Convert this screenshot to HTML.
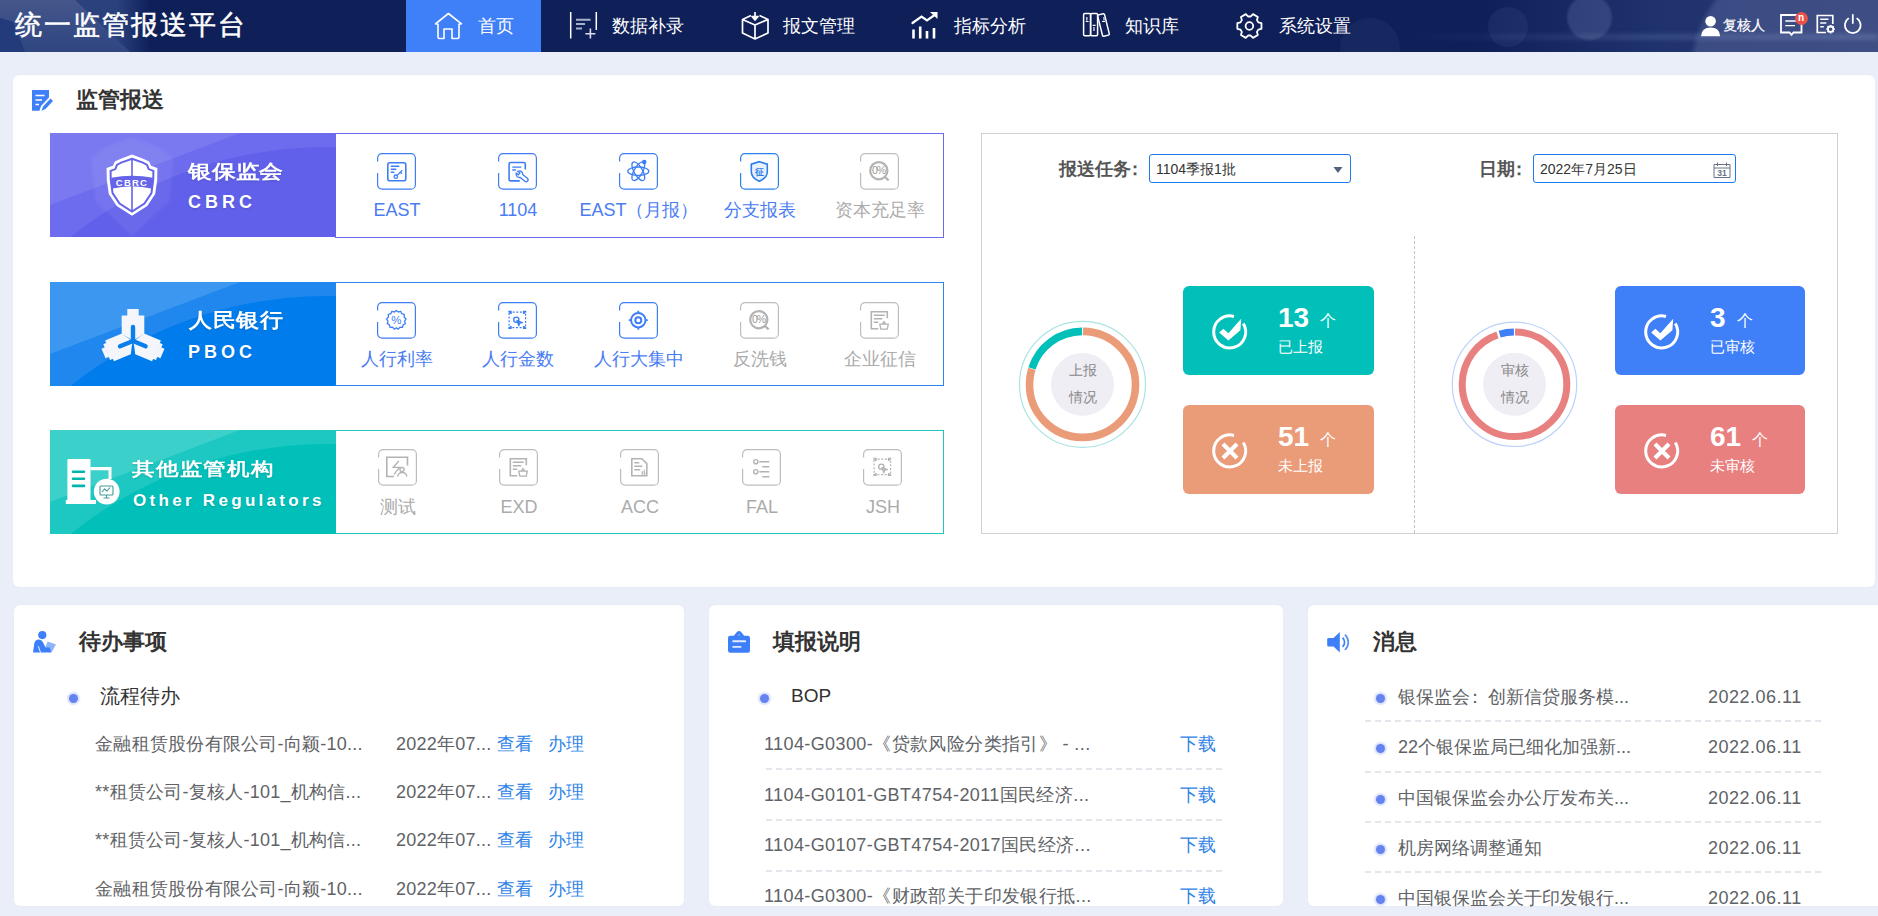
<!DOCTYPE html>
<html><head><meta charset="utf-8">
<style>
*{margin:0;padding:0;box-sizing:border-box}
html,body{width:1878px;height:916px;overflow:hidden}
body{position:relative;background:#eaeef9;font-family:"Liberation Sans",sans-serif;color:#333}
.a{position:absolute}
.t{position:absolute;white-space:nowrap;line-height:30px;height:30px}
#hdr{left:0;top:0;width:1878px;height:52px;background:#0f2059;overflow:hidden}
.nav{color:#fff;font-size:18px}
.card{position:absolute;background:#fff;border-radius:6px}
.ban{overflow:hidden}
.ban .t{text-shadow:0 1px 2px rgba(0,40,60,.18)}
.it{width:200px;text-align:center;font-size:18px}
.row{font-size:18px;color:#606266;letter-spacing:.25px}
.r2{letter-spacing:.4px}
.r3{letter-spacing:0}
.card{box-shadow:0 0 2px rgba(40,60,120,.06)}
.lk{color:#2f83e6}
.dash{height:2px;background:repeating-linear-gradient(90deg,#e6e5ec 0 6px,transparent 6px 10px)}
</style></head><body>
<!-- HEADER -->
<div id="hdr" class="a">
<div class="a" style="left:0;top:0;width:150px;height:52px;background:linear-gradient(90deg,#2a417e 0%,#2a417e 78%,#0f2059 100%)"></div><div class="a" style="left:0;top:0;width:150px;height:52px;background:linear-gradient(180deg,#45568b,#3a4e86 45%,#2f4681);clip-path:polygon(0 0,75px 0,130px 52px,25px 52px,13px 22px,0 18px)"></div><div class="a" style="left:0;top:0;width:150px;height:52px;background:#233b7b;clip-path:polygon(0 18px,13px 22px,25px 52px,0 52px)"></div>

<div class="a" style="left:1480px;top:0;width:398px;height:52px;background:linear-gradient(90deg,rgba(70,95,160,0),rgba(75,98,160,.28) 45%,rgba(85,102,160,.32))"></div>
<div class="a" style="left:1567px;top:-5px;width:45px;height:45px;border-radius:50%;background:rgba(150,165,215,.2);filter:blur(.8px)"></div>
<div class="a" style="left:1692px;top:-45px;width:230px;height:230px;border-radius:50%;background:rgba(165,175,220,.2);filter:blur(2px)"></div>
<div class="a" style="left:1488px;top:7px;width:40px;height:40px;border-radius:50%;background:rgba(150,165,215,.08)"></div><div class="a" style="left:1340px;top:18px;width:60px;height:60px;border-radius:50%;background:rgba(150,165,215,.06)"></div>
<div class="a" style="left:1400px;top:34px;width:478px;height:6px;background:linear-gradient(90deg,rgba(150,170,220,0),rgba(150,170,220,.18) 50%,rgba(150,170,220,.25));filter:blur(2px)"></div>
<div class="t" style="left:15px;top:10px;line-height:30px;font-size:27px;color:#fff;letter-spacing:2px;-webkit-text-stroke:.5px #fff">统一监管报送平台</div>
<div class="a" style="left:406px;top:0;width:135px;height:52px;background:#3f7ff8"></div>
<svg class="a" style="left:430px;top:8px" width="36" height="36" viewBox="0 0 36 36" fill="none" stroke="#fff" stroke-width="1.6" stroke-linejoin="round">
<path d="M5.5 15.8 L18.4 5.5 L31.5 15.8 L29 16.3 V29 Q29 30.5 27.5 30.5 H22 V21 H14 V30.5 H9.5 Q8 30.5 8 29 V16.3 Z"/></svg>
<div class="t nav" style="left:478px;top:11px">首页</div>
<svg class="a" style="left:566px;top:8px" width="36" height="36" viewBox="0 0 36 36" fill="none" stroke="#fff" stroke-width="1.5">
<path d="M4.7 4 V30.6 M30.3 4 V21.9"/><path d="M10 11.8 H24.6 M10 16 H19 M10 20.4 H16" stroke="#a8b0cc" stroke-width="2"/><path d="M24.4 20.5 V30.5 M19.4 25.8 H29.4" stroke="#dde" stroke-width="1.6"/></svg>
<div class="t nav" style="left:612px;top:11px">数据补录</div>
<svg class="a" style="left:738px;top:10px" width="36" height="36" viewBox="0 0 36 36" fill="none" stroke="#fff" stroke-width="1.7" stroke-linejoin="round">
<path d="M13 5.5 L4.5 9.5 M21.5 5.5 L30 9.5 M4.5 9.5 L17 15 L30 9.5 V23 L17 29 L4.5 23 Z M17 15 V29"/><path d="M17 2 V8" /><path d="M14 6.5 L17 10 L20 6.5 Z" fill="#fff"/></svg>
<div class="t nav" style="left:783px;top:11px">报文管理</div>
<svg class="a" style="left:908px;top:9px" width="36" height="36" viewBox="0 0 36 36" fill="none" stroke="#fff" stroke-width="2.2" stroke-linecap="round">
<path d="M4.5 14 L13.5 7.5 L19 11.5 L28 5"/><path d="M22 3 H29.5 V10 Z" fill="#fff" stroke="none"/><path d="M5.5 20.5 V29.5 M12.2 17.5 V29.5 M19 22 V29.5 M26 19 V29.5" stroke-width="2.6" stroke-linecap="butt"/></svg>
<div class="t nav" style="left:954px;top:11px">指标分析</div>
<svg class="a" style="left:1080px;top:8px" width="36" height="36" viewBox="0 0 36 36" fill="none" stroke="#fff" stroke-width="1.5">
<rect x="3.6" y="5.4" width="7" height="22.3" rx="1.2"/><rect x="10.6" y="5.4" width="7" height="22.3" rx="1.2"/><rect x="20" y="6" width="7" height="22" rx="1.2" transform="rotate(-14 23.5 17)"/>
<path d="M6.8 9 V12.5 M14 19 V23 M24 9 V12.5" stroke="#b8bfd6" stroke-width="1.6"/><path d="M5.8 13.5 H8.6 M12.6 17.4 H15.6 M22 13.5 H25" stroke-width="1.2"/></svg>
<div class="t nav" style="left:1125px;top:11px">知识库</div>
<svg class="a" style="left:1232px;top:8px" width="36" height="36" viewBox="0 0 36 36" fill="none" stroke="#fff" stroke-width="1.8" stroke-linejoin="round">
<path d="M29.48 20.79 L29.48 15.21 L26.30 14.40 L24.96 12.09 L25.86 8.93 L21.03 6.14 L18.74 8.49 L16.06 8.49 L13.77 6.14 L8.94 8.93 L9.84 12.09 L8.50 14.40 L5.32 15.21 L5.32 20.79 L8.50 21.60 L9.84 23.91 L8.94 27.07 L13.77 29.86 L16.06 27.51 L18.74 27.51 L21.03 29.86 L25.86 27.07 L24.96 23.91 L26.30 21.60 Z"/><circle cx="17.4" cy="18" r="3.8"/></svg>
<div class="t nav" style="left:1279px;top:11px">系统设置</div>
<svg class="a" style="left:1700px;top:15px" width="22" height="22" viewBox="0 0 22 22" fill="#fff">
<circle cx="10.6" cy="6.3" r="5.3"/><path d="M1 21.3 Q1.5 12.6 10.6 12.6 Q19.7 12.6 20.2 21.3 Z"/></svg>
<div class="t" style="left:1723px;top:10px;font-size:14px;color:#fff;-webkit-text-stroke:.25px #fff">复核人</div>
<svg class="a" style="left:1778px;top:12px" width="28" height="26" viewBox="0 0 28 26" fill="none" stroke="#fff" stroke-width="1.8">
<path d="M3 3 H23.5 V20.5 H15.5 L13.5 22.8 L11.5 20.5 H3 Z"/><path d="M7.3 9 H18.8 M7.3 13.6 H17" stroke-width="1.4"/></svg>
<div class="a" style="left:1794.5px;top:11.5px;width:13px;height:13px;border-radius:50%;background:#e8524a;color:#fff;font-size:10px;font-weight:bold;line-height:12px;text-align:center">n</div>
<svg class="a" style="left:1815px;top:13px" width="22" height="22" viewBox="0 0 22 22" fill="none" stroke="#fff" stroke-width="1.7">
<path d="M11 19.5 H2.3 V2.5 H17.8 V11"/><path d="M5.2 6.3 H13.5 M5.2 10 H11.3 M5.2 13.8 H8.8" stroke-width="1.5"/><circle cx="15.6" cy="16.2" r="2.7" stroke-width="1.8"/><path d="M15.6 12 V13.2 M15.6 19.2 V20.4 M11.4 16.2 H12.6 M18.6 16.2 H19.8 M12.6 13.2 L13.4 14 M17.8 18.4 L18.6 19.2 M18.6 13.2 L17.8 14 M13.4 18.4 L12.6 19.2" stroke-width="1.8"/></svg>
<svg class="a" style="left:1842px;top:13px" width="22" height="22" viewBox="0 0 22 22" fill="none" stroke="#fff" stroke-width="1.8" stroke-linecap="round">
<path d="M6.3 5.6 A7.9 7.9 0 1 0 15.2 5.6"/><path d="M10.8 2 V10" /></svg>
</div>
<!-- MAIN CARD -->
<div class="card" style="left:13px;top:75px;width:1862px;height:512px"></div>
<!-- title -->
<svg class="a" style="left:31px;top:89px" width="24" height="24" viewBox="0 0 24 24">
<path d="M1 1 H18 V8.5 L10 17 L8.5 21.8 H1 Z" fill="#3f7ff8"/><path d="M4.5 6.5 H13.5 M4.5 11 H11 M4.5 15.5 H8" stroke="#fff" stroke-width="1.3"/><path d="M10.5 21.8 L12 17.5 L19.5 9.5 L22 12 L14.5 20 Z" fill="#3f7ff8"/></svg>
<div class="t" style="left:76px;top:85px;font-size:22px;font-weight:bold;color:#333">监管报送</div>

<!-- banner 1 -->
<div class="a ban" style="left:50px;top:133px;width:286px;height:104px;background:#7d7cf0">
  <div class="a" style="left:0;top:0;width:286px;height:104px;background:#6d6cee"></div><div class="a" style="left:0;top:0;width:190px;height:72px;background:#7a79f0;clip-path:polygon(0 0,100% 0,0 100%)"></div><div class="a" style="left:-132.4px;top:13.6px;width:817px;height:817px;border-radius:50%;background:#6160ea"></div>
  <svg class="a" style="left:38px;top:4px;filter:blur(1.5px)" width="90" height="100" viewBox="0 0 54 62" opacity=".06"><path d="M26.5 0 L43.5 6.5 L52 13.5 L49.5 39.5 L26.5 61.5 L3.5 39.5 L1 13.5 L9.5 6.5 Z" fill="#fff"/></svg>
  <svg class="a" style="left:55px;top:21px" width="54" height="62" viewBox="0 0 54.2 62">
    <path d="M27.1 0.3 L38.9 4.8 L44.3 7.4 L46.2 11.8 L52.6 14.0 L52.4 26.0 L50.4 40.0 L42.4 52.2 L27.1 61.8 L11.8 52.2 L3.8 40.0 L1.8 26.0 L1.6 14.0 L8.0 11.8 L9.9 7.4 L15.3 4.8 L27.1 0.3 Z" fill="#fff"/>
    <path d="M27.1 4.6 L38.0 8.6 L42.2 10.8 L43.8 15.0 L48.6 16.8 L48.4 26.0 L46.6 39.2 L39.6 49.6 L27.1 57.6 L14.6 49.6 L7.6 39.2 L5.8 26.0 L5.6 16.8 L10.4 15.0 L12.0 10.8 L16.2 8.6 L27.1 4.6 Z" fill="none" stroke="#6463ea" stroke-width="2"/>
    <path d="M27.1 4.6 V57.6" stroke="#6463ea" stroke-width="1.6"/>
    <path d="M6.3 23.8 Q27.1 19.8 48 23.8 L47.6 34.8 Q27.1 29.6 6.6 34.8 Z" fill="#6463ea"/>
    <text x="27.1" y="31.6" font-size="9.6" font-weight="bold" fill="#fff" text-anchor="middle" letter-spacing="1.2" font-family="Liberation Sans,sans-serif">CBRC</text>
  </svg>
  <div class="t" style="left:138px;top:23.5px;font-size:19px;font-weight:bold;color:#fff;letter-spacing:0px;transform:scaleX(1.25);transform-origin:0 0">银保监会</div>
  <div class="t" style="left:138px;top:54px;font-size:18px;font-weight:bold;color:#fff;letter-spacing:4px">CBRC</div>
</div>
<div class="a" style="left:335px;top:133px;width:609px;height:105px;border:1px solid #6b6aea;border-left:none"></div>

<!-- banner 2 -->
<div class="a ban" style="left:50px;top:282px;width:286px;height:104px;background:#3d98ef">
  <div class="a" style="left:0;top:0;width:286px;height:104px;background:#1f87ee"></div><div class="a" style="left:0;top:0;width:190px;height:72px;background:#3b97ef;clip-path:polygon(0 0,100% 0,0 100%)"></div><div class="a" style="left:-132.4px;top:13.6px;width:817px;height:817px;border-radius:50%;background:#007cec"></div>
  <svg class="a" style="left:48px;top:26px" width="70" height="60" viewBox="-35 -33 70 60">
    <g fill="#f4f6fb"><g><path d="M-11.3 -25.5 H11.3 V-7.2 L0 -0.6 L-11.3 -7.2 Z"/><rect x="-5.7" y="-32" width="11.4" height="7"/></g><g transform="rotate(113)"><path d="M-11.3 -25.5 H11.3 V-7.2 L0 -0.6 L-11.3 -7.2 Z"/><rect x="-8.6" y="-28.6" width="17.2" height="3.6"/><rect x="-5.2" y="-32" width="10.4" height="3.8"/></g><g transform="rotate(247)"><path d="M-11.3 -25.5 H11.3 V-7.2 L0 -0.6 L-11.3 -7.2 Z"/><rect x="-8.6" y="-28.6" width="17.2" height="3.6"/><rect x="-5.2" y="-32" width="10.4" height="3.8"/></g></g>
    <g stroke="#0a7eec" stroke-width="4.4" stroke-linecap="round"><path d="M0 0 V-14"/><path d="M0 0 L-13 5.3"/><path d="M0 0 L12.6 5.3"/></g>
  </svg>
  <div class="t" style="left:139px;top:23.4px;font-size:20px;font-weight:bold;color:#fff;letter-spacing:.5px;transform:scaleX(1.15);transform-origin:0 0">人民银行</div>
  <div class="t" style="left:138px;top:54.6px;font-size:18px;font-weight:bold;color:#fff;letter-spacing:4px">PBOC</div>
</div>
<div class="a" style="left:335px;top:282px;width:609px;height:104px;border:1px solid #2a86ea;border-left:none"></div>

<!-- banner 3 -->
<div class="a ban" style="left:50px;top:430px;width:286px;height:104px;background:#3ad0c9">
  <div class="a" style="left:0;top:0;width:286px;height:104px;background:#1cc8c1"></div><div class="a" style="left:0;top:0;width:190px;height:72px;background:#3bd1ca;clip-path:polygon(0 0,100% 0,0 100%)"></div><div class="a" style="left:-132.4px;top:13.6px;width:817px;height:817px;border-radius:50%;background:#00c0b9"></div>
  <svg class="a" style="left:14px;top:27px" width="60" height="50" viewBox="0 0 60 50">
    <g fill="#fff">
      <path d="M3.4 3 Q3.4 2 4.4 2 H25.5 Q26.5 2 26.5 3 V43 H32 V47 H1.8 V43 H3.4 Z"/>
      <path d="M26.5 10 H47.5 V22 H44.5 V13.2 H26.5 Z"/>
      <circle cx="42.7" cy="34.6" r="12.9"/>
    </g>
    <g stroke="#00b5ae" stroke-width="2.6" stroke-linecap="round"><path d="M9 14.7 H20 M9 21.8 H20 M9 28.9 H20"/></g>
    <g fill="none" stroke="#3f9c98" stroke-width="1.1"><rect x="36" y="29" width="13" height="9" rx="1"/><path d="M38 35 L40.5 32 L43 34 L46 30.5 M42.5 38 V40.5 M39.5 41 H45.5"/></g>
  </svg>
  <div class="t" style="left:82px;top:23.5px;font-size:18px;font-weight:bold;color:#fff;letter-spacing:1px;transform:scaleX(1.25);transform-origin:0 0">其他监管机构</div>
  <div class="t" style="left:83px;top:56px;font-size:17px;font-weight:bold;color:#fff;letter-spacing:3.3px">Other Regulators</div>
</div>
<div class="a" style="left:335px;top:430px;width:609px;height:104px;border:1px solid #22c5bc;border-left:none"></div>

<svg class="a" style="left:377px;top:153px" width="39" height="37" viewBox="0 0 39 37" fill="none" stroke="#3e7ef4" stroke-width="1.2"><rect x="0.6" y="0.6" width="37.8" height="35.6" rx="4.5"/><rect x="0" y="8.5" width="2" height="11.5" fill="#fff" stroke="none"/><g transform="translate(0.3 0.2)"><rect x="10.5" y="9.5" width="18" height="18" rx="2" stroke-width="1.6"/><path d="M13.5 13 H22 M13.5 16 H19 M13.5 19 H17" stroke-width="1.4"/><circle cx="18.5" cy="23.5" r="1.7" stroke-width="1.3"/><path d="M19.8 22.2 L25 17 M23 19 L24.6 20.6" stroke-width="1.3"/></g></svg>
<div class="t it" style="left:297px;top:195px;color:#4a7cf2">EAST</div>
<svg class="a" style="left:498px;top:153px" width="39" height="37" viewBox="0 0 39 37" fill="none" stroke="#3e7ef4" stroke-width="1.2"><rect x="0.6" y="0.6" width="37.8" height="35.6" rx="4.5"/><rect x="0" y="8.5" width="2" height="11.5" fill="#fff" stroke="none"/><g transform="translate(0.3 0.2)"><path d="M27 16.3 V10.8 Q27 9.3 25.5 9.3 H12.3 Q10.8 9.3 10.8 10.8 V26.2 Q10.8 27.7 12.3 27.7 H21.5" stroke-width="1.6"/><path d="M14 13.9 H23 M14 16.8 H17.5" stroke-width="1.4"/><path d="M-8.2 -1.3 L-5 -1.3 L-5 1.3 L-8.2 1.3 A3.9 3.9 0 0 0 -1.5 2.2 L5.3 2.2 A2.2 2.2 0 0 0 5.3 -2.2 L-1.5 -2.2 A3.9 3.9 0 0 0 -8.2 -1.3 Z" stroke-width="1.5" transform="translate(24.2 23.6) rotate(40) scale(.88)"/></g></svg>
<div class="t it" style="left:418px;top:195px;color:#4a7cf2">1104</div>
<svg class="a" style="left:619px;top:153px" width="39" height="37" viewBox="0 0 39 37" fill="none" stroke="#3e7ef4" stroke-width="1.2"><rect x="0.6" y="0.6" width="37.8" height="35.6" rx="4.5"/><rect x="0" y="8.5" width="2" height="11.5" fill="#fff" stroke="none"/><g transform="translate(0.3 0.2)"><ellipse cx="19" cy="18" rx="10.5" ry="4.2" stroke-width="1.3"/><ellipse cx="19" cy="18" rx="10.5" ry="4.2" transform="rotate(60 19 18)" stroke-width="1.3"/><ellipse cx="19" cy="18" rx="10.5" ry="4.2" transform="rotate(-60 19 18)" stroke-width="1.3"/><circle cx="24.9" cy="8.9" r="2.3" fill="#3e7ef4" stroke="none"/></g></svg>
<div class="t it" style="left:539px;top:195px;color:#4a7cf2">EAST（月报）</div>
<svg class="a" style="left:740px;top:153px" width="39" height="37" viewBox="0 0 39 37" fill="none" stroke="#2a82ea" stroke-width="1.2"><rect x="0.6" y="0.6" width="37.8" height="35.6" rx="4.5"/><rect x="0" y="8.5" width="2" height="11.5" fill="#fff" stroke="none"/><g transform="translate(0.3 0.2)"><path d="M19 8.5 L27 11 V18.5 Q27 24.5 19 28 Q11 24.5 11 18.5 V11 Z" stroke="#2d7fe8" stroke-width="1.6" fill="#e8f1fd"/><text x="19" y="22" font-size="8.5" font-weight="bold" fill="#2d7fe8" stroke="none" text-anchor="middle" font-family="Liberation Sans,sans-serif">征</text></g></svg>
<div class="t it" style="left:660px;top:195px;color:#4a7cf2">分支报表</div>
<svg class="a" style="left:860px;top:153px" width="39" height="37" viewBox="0 0 39 37" fill="none" stroke="#bdbdbd" stroke-width="1.2"><rect x="0.6" y="0.6" width="37.8" height="35.6" rx="4.5"/><rect x="0" y="8.5" width="2" height="11.5" fill="#fff" stroke="none"/><g transform="translate(0.3 0.2)"><g stroke="#b3b3b3"><circle cx="18.5" cy="17.5" r="8.6" stroke-width="2.2"/><path d="M24.8 23.8 L28.3 27.3" stroke-width="2.4"/><text x="18.3" y="21.2" font-size="10.5" fill="#999" stroke="none" text-anchor="middle" letter-spacing="-.9" font-family="Liberation Sans,sans-serif">0%</text></g></g></svg>
<div class="t it" style="left:780px;top:195px;color:#ababab">资本充足率</div>
<svg class="a" style="left:377px;top:302px" width="39" height="37" viewBox="0 0 39 37" fill="none" stroke="#3e7ef4" stroke-width="1.2"><rect x="0.6" y="0.6" width="37.8" height="35.6" rx="4.5"/><rect x="0" y="8.5" width="2" height="11.5" fill="#fff" stroke="none"/><g transform="translate(0.3 0.2)"><path d="M19 8.3 L21 9.8 L23.5 9.2 L24.5 11.5 L27 12.3 L26.8 14.8 L28.7 16.8 L27.3 19 L28 21.4 L25.8 22.7 L25.2 25.2 L22.7 25 L21 27 L19 25.7 L17 27 L15.3 25 L12.8 25.2 L12.2 22.7 L10 21.4 L10.7 19 L9.3 16.8 L11.2 14.8 L11 12.3 L13.5 11.5 L14.5 9.2 L17 9.8 Z" stroke-width="1.3"/><text x="19" y="22.3" font-size="11.5" fill="#3e7ef4" stroke="none" text-anchor="middle" font-family="Liberation Sans,sans-serif">%</text></g></svg>
<div class="t it" style="left:297px;top:344px;color:#4a7cf2">人行利率</div>
<svg class="a" style="left:498px;top:302px" width="39" height="37" viewBox="0 0 39 37" fill="none" stroke="#3e7ef4" stroke-width="1.2"><rect x="0.6" y="0.6" width="37.8" height="35.6" rx="4.5"/><rect x="0" y="8.5" width="2" height="11.5" fill="#fff" stroke="none"/><g transform="translate(0.3 0.2)"><rect x="10.8" y="10" width="16.5" height="15.5" stroke-width="1.2" stroke-dasharray="2 1.6"/><path d="M10 9.5 h2.5 v2.2 M28 9.5 h-2.5 v2.2 M10 26 h2.5 v-2.2 M28 26 h-2.5 v-2.2" stroke-width="1.8"/><circle cx="18" cy="17.5" r="2.6" stroke-width="1.4"/><path d="M18.5 18 L20.5 24 L21.5 21 L24.5 20.5 Z" fill="#3e7ef4" stroke-width="1"/></g></svg>
<div class="t it" style="left:418px;top:344px;color:#4a7cf2">人行金数</div>
<svg class="a" style="left:619px;top:302px" width="39" height="37" viewBox="0 0 39 37" fill="none" stroke="#3e7ef4" stroke-width="1.2"><rect x="0.6" y="0.6" width="37.8" height="35.6" rx="4.5"/><rect x="0" y="8.5" width="2" height="11.5" fill="#fff" stroke="none"/><g transform="translate(0.3 0.2)"><circle cx="19" cy="18" r="7.2" stroke-width="2"/><circle cx="19" cy="18" r="3" stroke-width="2"/><path d="M19 8.5 V11 M19 25 V27.5 M9.5 18 H12 M26 18 H28.5" stroke-width="1.8"/></g></svg>
<div class="t it" style="left:539px;top:344px;color:#4a7cf2">人行大集中</div>
<svg class="a" style="left:740px;top:302px" width="39" height="37" viewBox="0 0 39 37" fill="none" stroke="#bdbdbd" stroke-width="1.2"><rect x="0.6" y="0.6" width="37.8" height="35.6" rx="4.5"/><rect x="0" y="8.5" width="2" height="11.5" fill="#fff" stroke="none"/><g transform="translate(0.3 0.2)"><g stroke="#b3b3b3"><circle cx="18.5" cy="17.5" r="8.6" stroke-width="2.2"/><path d="M24.8 23.8 L28.3 27.3" stroke-width="2.4"/><text x="18.3" y="21.2" font-size="10.5" fill="#999" stroke="none" text-anchor="middle" letter-spacing="-.9" font-family="Liberation Sans,sans-serif">0%</text></g></g></svg>
<div class="t it" style="left:660px;top:344px;color:#ababab">反洗钱</div>
<svg class="a" style="left:860px;top:302px" width="39" height="37" viewBox="0 0 39 37" fill="none" stroke="#bdbdbd" stroke-width="1.2"><rect x="0.6" y="0.6" width="37.8" height="35.6" rx="4.5"/><rect x="0" y="8.5" width="2" height="11.5" fill="#fff" stroke="none"/><g transform="translate(0.3 0.2)"><g stroke="#b3b3b3"><path d="M27 16 V9.5 H11 V26.5 H18" stroke-width="1.6"/><path d="M13.5 13 H24.5 M13.5 16.5 H22 M13.5 20 H18" stroke-width="1.4"/><path d="M19.5 22 H28 L27 27 H20.5 Z M22 22 L23.7 19.5 L25.5 22" stroke-width="1.3"/></g></g></svg>
<div class="t it" style="left:780px;top:344px;color:#ababab">企业征信</div>
<svg class="a" style="left:378px;top:449px" width="39" height="37" viewBox="0 0 39 37" fill="none" stroke="#bdbdbd" stroke-width="1.2"><rect x="0.6" y="0.6" width="37.8" height="35.6" rx="4.5"/><rect x="0" y="8.5" width="2" height="11.5" fill="#fff" stroke="none"/><g transform="translate(0.3 0.2)"><g stroke="#b3b3b3"><path d="M15.7 27.3 H8.5 V8 H29.2 V16.3" stroke-width="1.6"/><path d="M20.5 11.8 L15 18.2 H21.2 L15.7 25.2" stroke-width="1.4"/><circle cx="23.7" cy="20.4" r="2.1" stroke-width="1.3"/><path d="M19.3 27.3 Q20 23.3 23.9 23.3 Q27.8 23.3 28.6 27.3" stroke-width="1.3"/></g></g></svg>
<div class="t it" style="left:298px;top:492px;color:#ababab">测试</div>
<svg class="a" style="left:499px;top:449px" width="39" height="37" viewBox="0 0 39 37" fill="none" stroke="#bdbdbd" stroke-width="1.2"><rect x="0.6" y="0.6" width="37.8" height="35.6" rx="4.5"/><rect x="0" y="8.5" width="2" height="11.5" fill="#fff" stroke="none"/><g transform="translate(0.3 0.2)"><g stroke="#b3b3b3"><path d="M27 16 V9.5 H11 V26.5 H18" stroke-width="1.6"/><path d="M13.5 13 H24.5 M13.5 16.5 H22 M13.5 20 H18" stroke-width="1.4"/><path d="M19.5 22 H28 L27 27 H20.5 Z M22 22 L23.7 19.5 L25.5 22" stroke-width="1.3"/></g></g></svg>
<div class="t it" style="left:419px;top:492px;color:#ababab">EXD</div>
<svg class="a" style="left:620px;top:449px" width="39" height="37" viewBox="0 0 39 37" fill="none" stroke="#bdbdbd" stroke-width="1.2"><rect x="0.6" y="0.6" width="37.8" height="35.6" rx="4.5"/><rect x="0" y="8.5" width="2" height="11.5" fill="#fff" stroke="none"/><g transform="translate(0.3 0.2)"><g stroke="#b3b3b3"><path d="M11.5 9.5 H21.5 L26.5 14.5 V26.5 H11.5 Z" stroke-width="1.6"/><path d="M14 13.5 H19 M14 17 H22 M14 20.5 H20" stroke-width="1.4"/><path d="M22 25.5 V22 M24 25.5 V20.5 M26 25.5 V23" stroke-width="1.2"/></g></g></svg>
<div class="t it" style="left:540px;top:492px;color:#ababab">ACC</div>
<svg class="a" style="left:742px;top:449px" width="39" height="37" viewBox="0 0 39 37" fill="none" stroke="#bdbdbd" stroke-width="1.2"><rect x="0.6" y="0.6" width="37.8" height="35.6" rx="4.5"/><rect x="0" y="8.5" width="2" height="11.5" fill="#fff" stroke="none"/><g transform="translate(0.3 0.2)"><g stroke="#b3b3b3"><circle cx="13.5" cy="12.5" r="2.1" stroke-width="1.4"/><circle cx="13.5" cy="22.5" r="2.1" stroke-width="1.4"/><path d="M17 12.5 H27 M17 22.5 H27 M20 17.5 H27 M20 27.5 H27" stroke-width="1.4"/></g></g></svg>
<div class="t it" style="left:662px;top:492px;color:#ababab">FAL</div>
<svg class="a" style="left:863px;top:449px" width="39" height="37" viewBox="0 0 39 37" fill="none" stroke="#bdbdbd" stroke-width="1.2"><rect x="0.6" y="0.6" width="37.8" height="35.6" rx="4.5"/><rect x="0" y="8.5" width="2" height="11.5" fill="#fff" stroke="none"/><g transform="translate(0.3 0.2)"><g stroke="#b3b3b3"><rect x="10.8" y="10" width="16.5" height="15.5" stroke-width="1.2" stroke-dasharray="2 1.6"/><path d="M10 9.5 h2.5 v2.2 M28 9.5 h-2.5 v2.2 M10 26 h2.5 v-2.2 M28 26 h-2.5 v-2.2" stroke-width="1.8"/><circle cx="18" cy="17.5" r="2.6" stroke-width="1.4"/><path d="M18.5 18 L20.5 24 L21.5 21 L24.5 20.5 Z" fill="#bbb" stroke-width="1"/></g></g></svg>
<div class="t it" style="left:783px;top:492px;color:#ababab">JSH</div>
<!-- right panel -->
<div class="a" style="left:981px;top:133px;width:857px;height:401px;border:1px solid #cfcfd4"></div>
<div class="a" style="left:1414px;top:236px;width:0;height:297px;border-left:1px dashed #c4c4cc"></div>
<div class="t" style="left:1059px;top:154px;font-size:18px;font-weight:bold;color:#555">报送任务<span style="margin-left:-5px">：</span></div>
<div class="a" style="left:1149px;top:154px;width:202px;height:29px;border:1.5px solid #1a7bf0;border-radius:3px;background:#fff"></div>
<div class="t" style="left:1156px;top:154px;font-size:14px;color:#333">1104季报1批</div>
<svg class="a" style="left:1333px;top:166px" width="10" height="8" viewBox="0 0 10 8"><path d="M0.5 1 H9.5 L5 7 Z" fill="#51627e"/></svg>
<div class="t" style="left:1479px;top:154px;font-size:18px;font-weight:bold;color:#555">日期<span style="margin-left:-5px">：</span></div>
<div class="a" style="left:1533px;top:154px;width:203px;height:29px;border:1.5px solid #1a7bf0;border-radius:3px;background:#fff"></div>
<div class="t" style="left:1540px;top:154px;font-size:14px;color:#333">2022年7月25日</div>
<svg class="a" style="left:1713px;top:162px" width="18" height="16" viewBox="0 0 18 16"><path d="M1 2.5 H17 V15.5 H1 Z M1 6 H17" fill="none" stroke="#6a7286" stroke-width="1"/><path d="M4.5 0.5 V4 M13.5 0.5 V4" stroke="#6a7286" stroke-width="1"/><text x="9" y="14.2" font-size="8.5" font-weight="bold" fill="#6a7286" text-anchor="middle" font-family="Liberation Sans,sans-serif">31</text></svg>

<!-- donut 1 -->
<svg class="a" style="left:1012px;top:314px" width="141" height="141" viewBox="-70.5 -70.4 141 141">
<circle r="63" fill="none" stroke="#a9e4e1" stroke-width="1.2"/>
<circle r="53" fill="none" stroke="#ea9b78" stroke-width="7.6" stroke-dasharray="264.6 400" transform="rotate(-89.4)"/>
<circle r="53" fill="none" stroke="#00c0b9" stroke-width="7.6" stroke-dasharray="66.5 400" transform="rotate(-162.5)"/>
<circle r="31.5" fill="#f0eef5"/>
<text x="0" y="-9" font-size="14" fill="#888" text-anchor="middle" font-family="Liberation Sans,sans-serif">上报</text>
<text x="0" y="18" font-size="14" fill="#888" text-anchor="middle" font-family="Liberation Sans,sans-serif">情况</text>
</svg>
<!-- donut 2 -->
<svg class="a" style="left:1444px;top:314px" width="141" height="141" viewBox="-70.5 -70.3 141 141">
<circle r="62.2" fill="none" stroke="#bcd2fa" stroke-width="1.2"/>
<circle r="52.3" fill="none" stroke="#e88080" stroke-width="7" stroke-dasharray="310.2 400" transform="rotate(-89.4)"/>
<circle r="52.3" fill="none" stroke="#3f7ff8" stroke-width="7" stroke-dasharray="14.5 400" transform="rotate(-106.5)"/>
<circle r="31.5" fill="#f0eef5"/>
<text x="0" y="-9" font-size="14" fill="#888" text-anchor="middle" font-family="Liberation Sans,sans-serif">审核</text>
<text x="0" y="18" font-size="14" fill="#888" text-anchor="middle" font-family="Liberation Sans,sans-serif">情况</text>
</svg>

<!-- stat cards -->
<div class="a" style="left:1183px;top:286px;width:191px;height:89px;border-radius:6px;background:#00c0b9"></div>
<div class="a" style="left:1183px;top:405px;width:191px;height:89px;border-radius:6px;background:#ea9b78"></div>
<div class="a" style="left:1615px;top:286px;width:190px;height:89px;border-radius:6px;background:#3f7ff8"></div>
<div class="a" style="left:1615px;top:405px;width:190px;height:89px;border-radius:6px;background:#e88080"></div>
<svg class="a" style="left:1210px;top:312px" width="40" height="40" viewBox="-20 -20 40 40"><path d="M13.3 -8.5 A16 16 0 1 1 4 -15.5" fill="none" stroke="#fff" stroke-width="3"/><path d="M-10.8 0.6 L-6.6 -3.2 L-1.6 1.2 L11.2 -13.2 L10.4 -1.8 L-1.6 8.6 Z" fill="#fff"/></svg>
<div class="t" style="left:1278px;top:303px;font-size:28px;font-weight:bold;color:#fff">13<span style="font-size:16px;font-weight:normal;margin-left:11px;position:relative;top:-1px">个</span></div>
<div class="t" style="left:1278px;top:332px;font-size:15px;color:#fff">已上报</div>
<svg class="a" style="left:1210px;top:431px" width="40" height="40" viewBox="-20 -20 40 40"><path d="M13.3 -8.5 A16 16 0 1 1 4 -15.5" fill="none" stroke="#fff" stroke-width="3"/><path d="M-7 -7 L7 7 M7 -7 L-7 7" stroke="#fff" stroke-width="4.2"/></svg>
<div class="t" style="left:1278px;top:422px;font-size:28px;font-weight:bold;color:#fff">51<span style="font-size:16px;font-weight:normal;margin-left:11px;position:relative;top:-1px">个</span></div>
<div class="t" style="left:1278px;top:451px;font-size:15px;color:#fff">未上报</div>
<svg class="a" style="left:1642px;top:312px" width="40" height="40" viewBox="-20 -20 40 40"><path d="M13.3 -8.5 A16 16 0 1 1 4 -15.5" fill="none" stroke="#fff" stroke-width="3"/><path d="M-10.8 0.6 L-6.6 -3.2 L-1.6 1.2 L11.2 -13.2 L10.4 -1.8 L-1.6 8.6 Z" fill="#fff"/></svg>
<div class="t" style="left:1710px;top:303px;font-size:28px;font-weight:bold;color:#fff">3<span style="font-size:16px;font-weight:normal;margin-left:11px;position:relative;top:-1px">个</span></div>
<div class="t" style="left:1710px;top:332px;font-size:15px;color:#fff">已审核</div>
<svg class="a" style="left:1642px;top:431px" width="40" height="40" viewBox="-20 -20 40 40"><path d="M13.3 -8.5 A16 16 0 1 1 4 -15.5" fill="none" stroke="#fff" stroke-width="3"/><path d="M-7 -7 L7 7 M7 -7 L-7 7" stroke="#fff" stroke-width="4.2"/></svg>
<div class="t" style="left:1710px;top:422px;font-size:28px;font-weight:bold;color:#fff">61<span style="font-size:16px;font-weight:normal;margin-left:11px;position:relative;top:-1px">个</span></div>
<div class="t" style="left:1710px;top:451px;font-size:15px;color:#fff">未审核</div>

<!-- BOTTOM CARDS -->
<div class="card" style="left:14px;top:605px;width:670px;height:301px"></div>
<div class="card" style="left:709px;top:605px;width:574px;height:301px"></div>
<div class="card" style="left:1308px;top:605px;width:600px;height:301px"></div>
<svg class="a" style="left:28px;top:626px" width="32" height="32" viewBox="0 0 32 32">
<circle cx="14.3" cy="9.1" r="4.1" fill="#3d7ff8"/>
<path d="M19.6 15.5 L28 18.6 L23.4 26.4 L17.2 21.6 Z" fill="#8eb5fb"/>
<path d="M5 26.5 L6.3 17.5 Q7 13.5 11 13.5 Q13.6 13.5 14.8 16 L17.6 21.4 H21.8 L23.3 26.5 Z" fill="#3d7ff8"/>
<path d="M10.3 20.2 L12.6 26.6" stroke="#fff" stroke-width="0.9"/></svg>
<div class="t" style="left:79px;top:627px;font-size:22px;font-weight:bold;color:#333">待办事项</div>
<div class="a" style="left:68.5px;top:693.5px;width:9px;height:9px;border-radius:50%;background:#6583ee;box-shadow:0 0 1.5px 2px rgba(120,145,240,.28)"></div>
<div class="t" style="left:100px;top:681px;font-size:19.5px;color:#333">流程待办</div>
<div class="t row" style="left:95px;top:729px">金融租赁股份有限公司-向颖-10...</div>
<div class="t row" style="left:396px;top:729px">2022年07...</div>
<div class="t row lk" style="left:497px;top:729px">查看</div>
<div class="t row lk" style="left:548px;top:729px">办理</div>
<div class="t row" style="left:95px;top:777px">**租赁公司-复核人-101_机构信...</div>
<div class="t row" style="left:396px;top:777px">2022年07...</div>
<div class="t row lk" style="left:497px;top:777px">查看</div>
<div class="t row lk" style="left:548px;top:777px">办理</div>
<div class="t row" style="left:95px;top:825px">**租赁公司-复核人-101_机构信...</div>
<div class="t row" style="left:396px;top:825px">2022年07...</div>
<div class="t row lk" style="left:497px;top:825px">查看</div>
<div class="t row lk" style="left:548px;top:825px">办理</div>
<div class="t row" style="left:95px;top:874px">金融租赁股份有限公司-向颖-10...</div>
<div class="t row" style="left:396px;top:874px">2022年07...</div>
<div class="t row lk" style="left:497px;top:874px">查看</div>
<div class="t row lk" style="left:548px;top:874px">办理</div>
<svg class="a" style="left:723px;top:626px" width="32" height="32" viewBox="0 0 32 32">
<path d="M7.2 9.8 H10.8 L14.3 5.6 Q16 4.4 17.7 5.6 L21.2 9.8 H24.8 Q27 9.8 27 12 V24.6 Q27 26.8 24.8 26.8 H7.2 Q5 26.8 5 24.6 V12 Q5 9.8 7.2 9.8 Z" fill="#3d7ff8"/>
<path d="M14.6 9.6 L16 8.1 L17.4 9.6 Z" fill="#9dbefa"/>
<path d="M10.2 15.3 H22.2 M10.2 20.9 H17.6" stroke="#e3ecfd" stroke-width="1.9" stroke-linecap="round"/></svg>
<div class="t" style="left:773px;top:627px;font-size:22px;font-weight:bold;color:#333">填报说明</div>
<div class="a" style="left:759.5px;top:693.5px;width:9px;height:9px;border-radius:50%;background:#6583ee;box-shadow:0 0 1.5px 2px rgba(120,145,240,.28)"></div>
<div class="t" style="left:791px;top:680.5px;font-size:19px;color:#333">BOP</div>
<div class="t row r2" style="left:764px;top:729px">1104-G0300-《贷款风险分类指引》 - ...</div>
<div class="t row lk" style="left:1180px;top:729px">下载</div>
<div class="t row r2" style="left:764px;top:780px">1104-G0101-GBT4754-2011国民经济...</div>
<div class="t row lk" style="left:1180px;top:780px">下载</div>
<div class="t row r2" style="left:764px;top:830px">1104-G0107-GBT4754-2017国民经济...</div>
<div class="t row lk" style="left:1180px;top:830px">下载</div>
<div class="t row r2" style="left:764px;top:881px">1104-G0300-《财政部关于印发银行抵...</div>
<div class="t row lk" style="left:1180px;top:881px">下载</div>
<div class="a dash" style="left:766px;top:768px;width:457px"></div>
<div class="a dash" style="left:766px;top:819px;width:457px"></div>
<div class="a dash" style="left:766px;top:870px;width:457px"></div>
<svg class="a" style="left:1322px;top:626px" width="32" height="32" viewBox="0 0 32 32">
<path d="M6.5 12 H11.5 L17.8 6 V26.5 L11.5 20.6 H6.5 Q5.2 20.6 5.2 19.3 V13.3 Q5.2 12 6.5 12 Z" fill="#3d7ff8"/>
<path d="M20.6 11.6 Q22.6 13.6 22.6 16.3 Q22.6 19 20.6 21" fill="none" stroke="#3d7ff8" stroke-width="1.7"/>
<path d="M22.9 8.6 Q26.3 11.8 26.3 16.3 Q26.3 20.8 22.9 24" fill="none" stroke="#5a90f8" stroke-width="1.7"/></svg>
<div class="t" style="left:1373px;top:627px;font-size:22px;font-weight:bold;color:#333">消息</div>
<div class="a" style="left:1375.5px;top:693.5px;width:9px;height:9px;border-radius:50%;background:#6583ee;box-shadow:0 0 1.5px 2px rgba(120,145,240,.28)"></div>
<div class="t row r3" style="left:1398px;top:682px">银保监会<span style="margin-left:-4px;margin-right:4px">：</span>创新信贷服务模...</div>
<div class="t row r3" style="letter-spacing:.5px;left:1708px;top:682px">2022.06.11</div>
<div class="a" style="left:1375.5px;top:743.5px;width:9px;height:9px;border-radius:50%;background:#6583ee;box-shadow:0 0 1.5px 2px rgba(120,145,240,.28)"></div>
<div class="t row r3" style="left:1398px;top:732px">22个银保监局已细化加强新...</div>
<div class="t row r3" style="letter-spacing:.5px;left:1708px;top:732px">2022.06.11</div>
<div class="a" style="left:1375.5px;top:794.5px;width:9px;height:9px;border-radius:50%;background:#6583ee;box-shadow:0 0 1.5px 2px rgba(120,145,240,.28)"></div>
<div class="t row r3" style="left:1398px;top:783px">中国银保监会办公厅发布关...</div>
<div class="t row r3" style="letter-spacing:.5px;left:1708px;top:783px">2022.06.11</div>
<div class="a" style="left:1375.5px;top:844.5px;width:9px;height:9px;border-radius:50%;background:#6583ee;box-shadow:0 0 1.5px 2px rgba(120,145,240,.28)"></div>
<div class="t row r3" style="left:1398px;top:833px">机房网络调整通知</div>
<div class="t row r3" style="letter-spacing:.5px;left:1708px;top:833px">2022.06.11</div>
<div class="a" style="left:1375.5px;top:894.5px;width:9px;height:9px;border-radius:50%;background:#6583ee;box-shadow:0 0 1.5px 2px rgba(120,145,240,.28)"></div>
<div class="t row r3" style="left:1398px;top:883px">中国银保监会关于印发银行...</div>
<div class="t row r3" style="letter-spacing:.5px;left:1708px;top:883px">2022.06.11</div>
<div class="a dash" style="left:1365px;top:720px;width:457px"></div>
<div class="a dash" style="left:1365px;top:771px;width:457px"></div>
<div class="a dash" style="left:1365px;top:821px;width:457px"></div>
<div class="a dash" style="left:1365px;top:871px;width:457px"></div>
</body></html>
